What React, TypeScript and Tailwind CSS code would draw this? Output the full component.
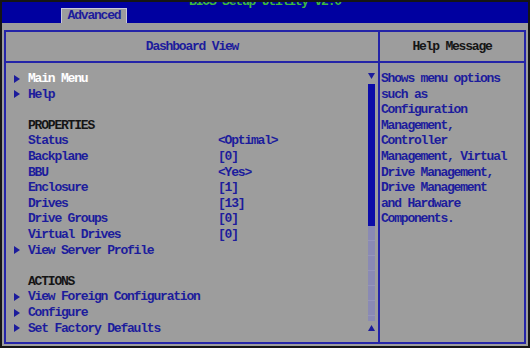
import React from 'react'

interface Row {
  label: string
  value?: string
  arrow?: boolean
  heading?: boolean
  selected?: boolean
  blank?: boolean
}

const rows: Row[] = [
  { label: 'Main Menu', arrow: true, selected: true },
  { label: 'Help', arrow: true },
  { label: '', blank: true },
  { label: 'PROPERTIES', heading: true },
  { label: 'Status', value: '<Optimal>' },
  { label: 'Backplane', value: '[0]' },
  { label: 'BBU', value: '<Yes>' },
  { label: 'Enclosure', value: '[1]' },
  { label: 'Drives', value: '[13]' },
  { label: 'Drive Groups', value: '[0]' },
  { label: 'Virtual Drives', value: '[0]' },
  { label: 'View Server Profile', arrow: true },
  { label: '', blank: true },
  { label: 'ACTIONS', heading: true },
  { label: 'View Foreign Configuration', arrow: true },
  { label: 'Configure', arrow: true },
  { label: 'Set Factory Defaults', arrow: true },
]

const helpLines = [
  'Shows menu options',
  'such as',
  'Configuration',
  'Management,',
  'Controller',
  'Management, Virtual',
  'Drive Management,',
  'Drive Management',
  'and Hardware',
  'Components.',
]

const mono = "font-['Liberation_Mono','DejaVu_Sans_Mono',monospace] font-bold text-[13px] tracking-[-1.2px] leading-[15.6px]"

function Tri({ dir }: { dir: 'right' | 'up' | 'down' }) {
  const pts = dir === 'right' ? '0,0 6,4 0,8' : dir === 'up' ? '0,6 3.5,0 7,6' : '0,0 7,0 3.5,6'
  const w = dir === 'right' ? 6 : 7
  const h = dir === 'right' ? 8 : 6
  return (
    <svg width={w} height={h} viewBox={`0 0 ${w} ${h}`}>
      <polygon points={pts} fill="#1c1c9c" />
    </svg>
  )
}

export default function App() {
  return (
    <div className={`w-[530px] h-[348px] flex flex-col border-2 border-[#151515] bg-[#9d9d9d] overflow-hidden ${mono}`}>
      {/* top bar */}
      <div className="h-[21px] bg-[#0000a0] relative shrink-0">
        <div className="absolute left-0 right-0 -top-[8px] text-center text-[#3cb83c] whitespace-pre">BIOS Setup Utility v2.0</div>
        <div className="absolute left-[59px] top-[6px] w-[66px] h-[15px] bg-[#9d9d9d] border-t border-x border-[#c8c8d8] text-center text-[#1c1c9c] leading-[14px]">Advanced</div>
      </div>

      {/* body */}
      <div className="flex-1 pt-[7px] pl-[2px] pr-[2px] pb-[2px] flex">
        <div className="flex-1 flex border-2 border-[#2424a8]">
          {/* left panel */}
          <div className="w-[374px] flex flex-col border-r-2 border-[#2424a8]">
            <div className="h-[31px] border-b-2 border-[#2424a8] flex items-center justify-center text-[#1c1c9c] shrink-0">Dashboard View</div>
            <div className="flex-1 flex">
              <div className="flex-1 pt-[8px] pl-[8px]">
                {rows.map((r, i) => (
                  <div key={i} className="flex items-center h-[15.6px] whitespace-pre">
                    <div className="w-[14px] flex items-center">{r.arrow ? <Tri dir="right" /> : null}</div>
                    <div className={`w-[190px] ${r.selected ? 'text-white' : r.heading ? 'text-[#151515]' : 'text-[#1c1c9c]'}`}>{r.label}</div>
                    <div className="text-[#1c1c9c]">{r.value ?? ''}</div>
                  </div>
                ))}
              </div>
              {/* scrollbar */}
              <div className="w-[11px] flex flex-col items-center pt-[10px] pb-[11px] pr-[2px]">
                <Tri dir="down" />
                <div className="w-[7px] flex-1 flex flex-col mt-[5px] mb-[4px]">
                  <div className="h-[142px] bg-[#0c0ca8]" />
                  <div className="flex-1 bg-[repeating-linear-gradient(180deg,#8a8ab4_0px,#8a8ab4_14px,#a0a0c4_15px)]" />
                </div>
                <Tri dir="up" />
              </div>
            </div>
          </div>

          {/* right panel */}
          <div className="flex-1 flex flex-col">
            <div className="h-[31px] border-b-2 border-[#2424a8] flex items-center justify-center text-[#151515] shrink-0">Help Message</div>
            <div className="pt-[8px] pl-[1px] text-[#1c1c9c]">
              {helpLines.map((l, i) => (
                <div key={i} className="h-[15.6px] whitespace-pre">{l}</div>
              ))}
            </div>
          </div>
        </div>
      </div>
    </div>
  )
}
